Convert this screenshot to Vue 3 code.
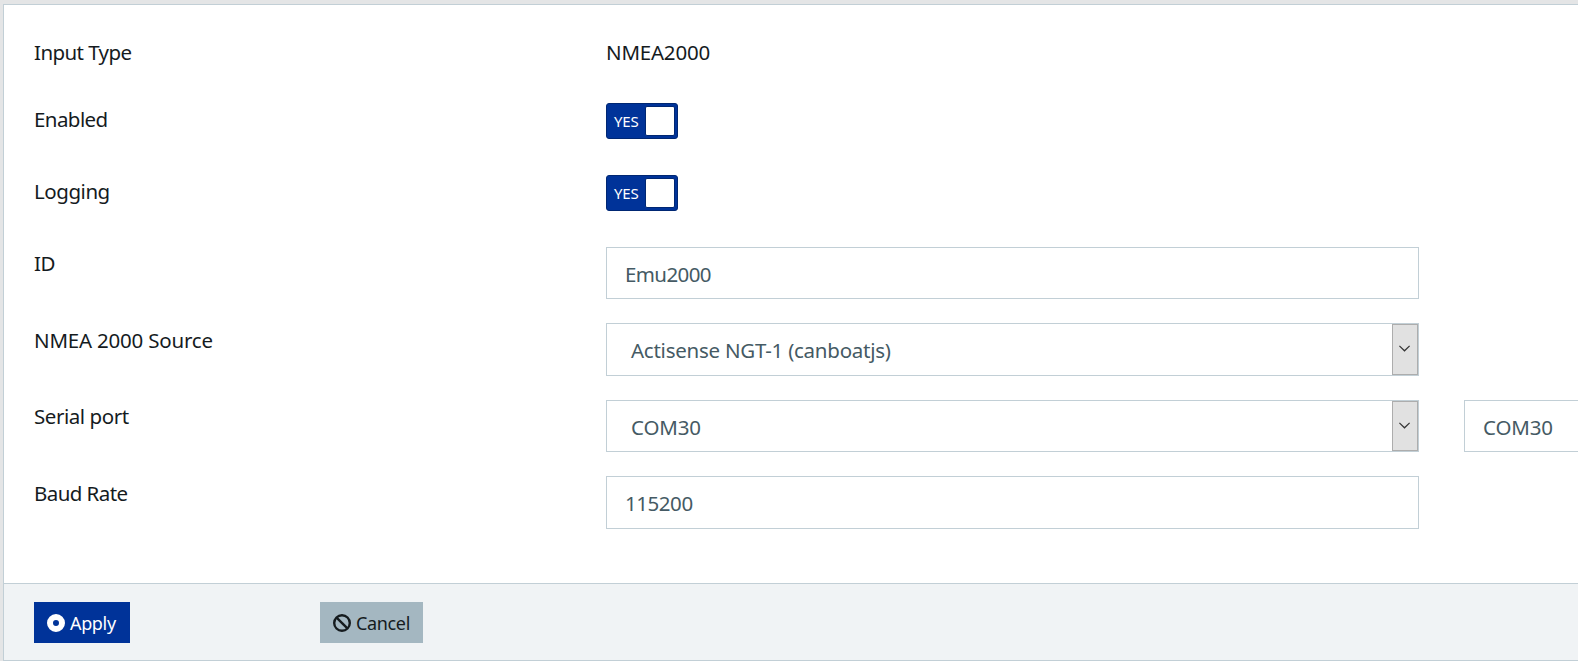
<script setup>
const rows = [
  { key: 'type', label: 'Input Type', kind: 'text', value: 'NMEA2000' },
  { key: 'enabled', label: 'Enabled', kind: 'toggle' },
  { key: 'logging', label: 'Logging', kind: 'toggle' },
  { key: 'id', label: 'ID', kind: 'input', value: 'Emu2000' },
  { key: 'source', label: 'NMEA 2000 Source', kind: 'select', value: 'Actisense NGT-1 (canboatjs)' },
  { key: 'port', label: 'Serial port', kind: 'select', value: 'COM30', extra: 'COM30' },
  { key: 'baud', label: 'Baud Rate', kind: 'input', value: '115200' }
]
</script>

<template>
  <div class="page">
    <section class="card">
      <div class="body">
        <div v-for="row in rows" :key="row.key" class="row" :class="row.key">
          <div class="label"><span>{{ row.label }}</span></div>
          <div v-if="row.kind === 'text'" class="plain"><span>{{ row.value }}</span></div>
          <div v-else-if="row.kind === 'toggle'" class="toggle">
            <span class="yes">YES</span>
            <span class="knob"></span>
          </div>
          <div v-else class="field" :class="row.kind">
            <span class="value">{{ row.value }}</span>
            <span v-if="row.kind === 'select'" class="arrow">
              <svg width="12" height="7" viewBox="0 0 12 7">
                <path d="M0.4 0.9L5.5 5.8L10.6 0.9" fill="none" stroke="#333" stroke-width="1.2" />
              </svg>
            </span>
          </div>
          <div v-if="row.extra" class="field extra"><span class="value">{{ row.extra }}</span></div>
        </div>
      </div>
      <footer class="footer">
        <button class="btn apply">
          <svg width="18" height="18" viewBox="0 0 18 18">
            <circle cx="9" cy="9" r="6" fill="none" stroke="#fff" stroke-width="6" />
          </svg>
          <span class="caption">Apply</span>
        </button>
        <button class="btn cancel">
          <svg width="18" height="18" viewBox="0 0 18 18">
            <circle cx="9" cy="9" r="7.8" fill="none" stroke="#151b1e" stroke-width="2.4" />
            <path d="M3.6 3.6L14.4 14.4" stroke="#151b1e" stroke-width="2.4" />
          </svg>
          <span class="caption">Cancel</span>
        </button>
      </footer>
    </section>
  </div>
</template>

<style>
body {
  margin: 0;
  overflow: hidden;
}
</style>

<style scoped>
.page {
  box-sizing: border-box;
  width: 100%;
  height: 661px;
  padding: 4px 0 0 3px;
  overflow: hidden;
  background: #e4e5e6;
  color: #151b1e;
  font: 20.5px/32px "Noto Sans", sans-serif;
  letter-spacing: -0.45px;
  white-space: nowrap;
}
.card {
  box-sizing: border-box;
  height: 657px;
  border: 1px solid #c2cfd6;
  border-right: 0;
  background: #fff;
  display: flex;
  flex-direction: column;
}
.body {
  flex: 1;
  padding: 31px 0 0 30px;
}
.row {
  display: grid;
  grid-template-columns: 572px 813px 114px;
  align-items: start;
  height: 72px;
}
.type { height: 67px; }
.id, .port, .baud { height: 76px; }
.source { height: 77px; }
.source .label, .baud .label { padding-top: 1px; }
.type .label, .enabled .label, .baud .label { letter-spacing: -0.57px; }
.source .label { letter-spacing: -0.2px; }
.plain { letter-spacing: -0.2px; }
.source .value { letter-spacing: -0.25px; }
.port .value { letter-spacing: -0.15px; }
.id .value { letter-spacing: -0.6px; }
.toggle {
  box-sizing: border-box;
  width: 72px;
  height: 36px;
  padding: 2px 2px 2px 7px;
  border: 1px solid #002773;
  border-radius: 3px;
  background: #003399;
  color: #fff;
  display: flex;
  justify-content: space-between;
  font-size: 15px;
  letter-spacing: -0.2px;
}
.yes { line-height: 30px; }
.knob {
  box-sizing: border-box;
  width: 30px;
  height: 30px;
  border: 1px solid #002773;
  border-radius: 2px;
  background: #fff;
}
.field {
  box-sizing: border-box;
  height: 52px;
  border: 1px solid #c2cfd6;
  display: flex;
  align-items: stretch;
  justify-content: space-between;
  background: #fff;
  color: #455a64;
}
.source .field, .baud .field { height: 53px; }
.value {
  padding-left: 18px;
  line-height: 53px;
}
.select .value { padding-left: 24px; }
.arrow {
  box-sizing: border-box;
  width: 26px;
  border: 1px solid #adadad;
  background: #e1e1e1;
  display: flex;
  align-items: center;
  justify-content: center;
}
.arrow svg { margin-top: -2px; }
.extra {
  margin-left: 45px;
  width: 120px;
}
.footer {
  box-sizing: border-box;
  height: 77px;
  padding: 18px 0 0 30px;
  border-top: 1px solid #c2cfd6;
  background: #f0f3f5;
  display: flex;
  gap: 190px;
}
.btn {
  box-sizing: border-box;
  height: 41px;
  width: 96px;
  padding: 0 0 0 13px;
  border: 0;
  display: flex;
  align-items: center;
  gap: 5px;
  font: 18px/41px "Noto Sans", sans-serif;
  letter-spacing: -0.35px;
}
.caption { padding-top: 2px; line-height: 39px; }
.apply { background: #003399; color: #fff; }
.cancel { width: 103px; background: #a4b7c1; color: #151b1e; }
</style>
